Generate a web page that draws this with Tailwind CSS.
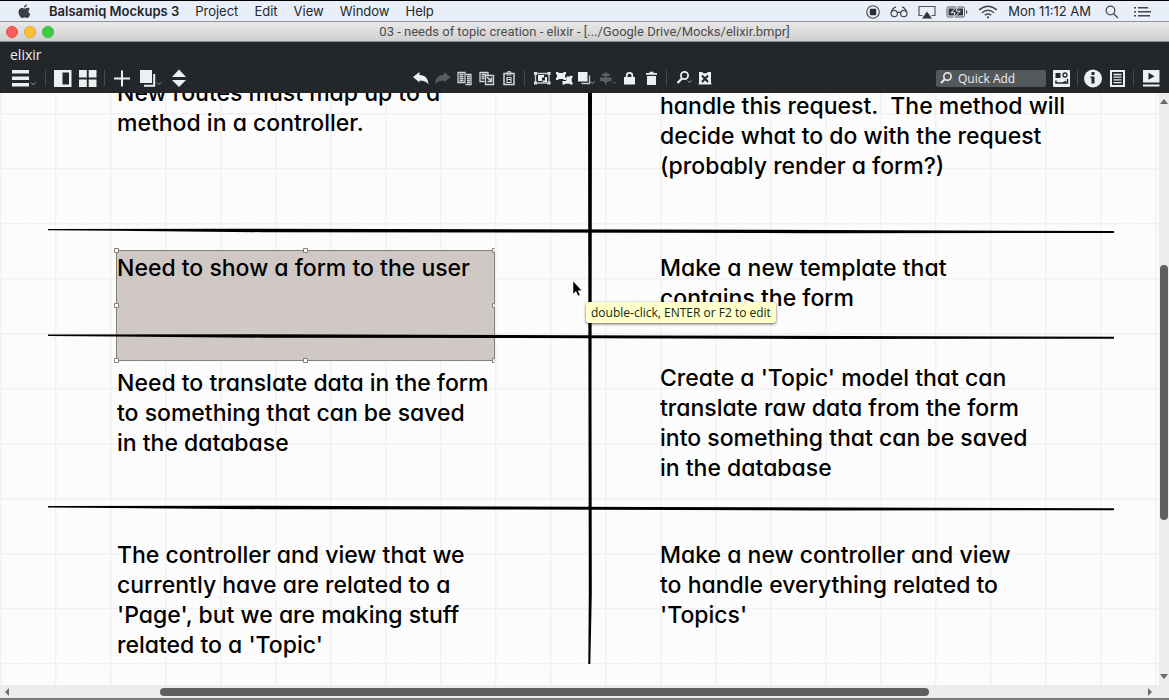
<!DOCTYPE html>
<html lang="en">
<head>
<meta charset="utf-8">
<title>elixir - Balsamiq Mockups 3</title>
<script src="https://cdn.jsdelivr.net/npm/@tailwindcss/browser@4"></script>
</head>
<body class="flex h-screen flex-col overflow-hidden bg-[#fcfcfc] font-['Inter',sans-serif] text-black">

<!-- System menu bar -->
<header class="flex h-[22px] shrink-0 items-center border-t border-b border-t-black border-b-[#8e9296] bg-[#e9eff8] pt-px pr-[18px] pl-[18px] text-[13px] text-[#23262b]">
  <nav aria-label="Menu bar" class="flex items-center gap-4">
    <button aria-label="Apple menu" class="mr-[2px]"><svg class="block" width="13" height="15" viewBox="0 0 13 15" fill="#3c4046"><path d="M8.9 0.3c.1 1.700-1.300 3.200-2.800 3.200C6 2 7.400.500 8.900.300zM11.900 5.100c-2 1.300-1.700 4.100.500 5-.6 1.700-1.900 4-3.200 4-1 0-1.400-.6-2.500-.6s-1.500.6-2.400.6C2.400 14.100.5 10.800.5 8.100c0-2.700 1.700-4.200 3.400-4.200 1.100 0 2 .7 2.700.7s1.700-.8 3-.8c.9 0 1.700.5 2.300 1.300z"/></svg></button>
    <button class="font-semibold">Balsamiq Mockups 3</button>
    <button>Project</button>
    <button>Edit</button>
    <button>View</button>
    <button>Window</button>
    <button>Help</button>
  </nav>
  <div class="ml-auto flex items-center gap-[10px]">
    <button aria-label="Recording"><svg class="block" width="14" height="14" viewBox="0 0 14 14"><circle cx="7" cy="7" r="6.300" fill="none" stroke="#44484d" stroke-width="1.100"/><rect x="3.800" y="3.800" width="6.400" height="6.400" rx="1" fill="#2b2e33"/></svg></button>
    <button aria-label="Reader"><svg class="block" width="18" height="12" viewBox="0 0 18 12" fill="none" stroke="#44484d" stroke-width="1.200"><circle cx="4.200" cy="7.500" r="3.200"/><circle cx="13.800" cy="7.500" r="3.200"/><path d="M7.300 6.800q1.700-1.300 3.400 0M1.200 6.500C2 3.500 3.500 1.500 6 1.200M16.800 6.500C16 3.500 14.500 1.500 12 1.200"/></svg></button>
    <button aria-label="AirPlay"><svg class="block" width="18" height="14" viewBox="0 0 18 14"><path d="M4.500 10.500H1v-9h16v9h-3.500" fill="none" stroke="#55595e" stroke-width="1.200"/><path d="M9 6.500l5 7H4z" fill="#33363b"/></svg></button>
    <button aria-label="Battery"><svg class="block" width="22" height="12" viewBox="0 0 22 12"><rect x="1" y="1" width="17.500" height="10" rx="1.500" fill="none" stroke="#55595e"/><rect x="2.500" y="2.500" width="14.500" height="7" fill="#33363b"/><path d="M20 4v4q1.500-.5 1.500-2T20 4z" fill="#55595e"/><path d="M11.500 0L5 6.700h4L7.500 12l6.800-6.900h-4z" fill="#33363b" stroke="#e9eff8"/></svg></button>
    <button aria-label="Wi-Fi"><svg class="block" width="20" height="14" viewBox="0 0 20 14" fill="none" stroke="#44484d" stroke-width="1.400"><path d="M1 4.900q9-7.400 18 0M4 7.700q6-4.900 12 0M6.800 10.300q3.200-2.500 6.400 0"/><circle cx="10" cy="12.300" r="1.100" fill="#44484d" stroke="none"/></svg></button>
    <time>Mon 11:12 AM</time>
    <button aria-label="Spotlight" class="ml-[4px]"><svg class="block" width="14" height="14" viewBox="0 0 14 14" fill="none" stroke="#44484d" stroke-width="1.300"><circle cx="5.500" cy="5.500" r="4.300"/><path d="M8.700 8.700L13 13"/></svg></button>
    <button aria-label="Notification Center" class="ml-[4px]"><svg class="block" width="18" height="12" viewBox="0 0 18 12" fill="#44484d"><path d="M1 1h2v1.500H1zM1 5h2v1.500H1zM1 9h2v1.500H1zM5 1h10v1.500H5zM5 5h13v1.500H5zM5 9h12v1.500H5z"/></svg></button>
  </div>
</header>

<!-- Window title bar -->
<div class="grid h-5 shrink-0 grid-cols-[1fr_auto_1fr] items-center border-b border-[#8b8b8b] bg-linear-to-b from-[#e9e9e9] to-[#cfcfcf] px-[6px]">
  <div class="flex gap-[6px]">
    <button aria-label="Close" class="size-3 rounded-full border border-[#e2504b] bg-[#f85e57]"></button>
    <button aria-label="Minimize" class="size-3 rounded-full border border-[#e3a832] bg-[#fabd35]"></button>
    <button aria-label="Zoom" class="size-3 rounded-full border border-[#37b83a] bg-[#3fca42]"></button>
  </div>
  <h1 class="font-['Roboto',sans-serif] text-[13px] leading-[18px] text-[#4c4c4c]">03 - needs of topic creation - elixir - [.../Google Drive/Mocks/elixir.bmpr]</h1>
</div>

<!-- Application toolbar -->
<div class="flex h-[51px] shrink-0 flex-col bg-[#23272a] font-['Open_Sans',sans-serif] text-[#edf0f1]">
  <div class="mb-[2px] flex h-6 items-center px-[10px] text-[14px]">elixir</div>
  <div class="flex h-5 items-center pr-[9px] pl-[11px]">
    <div class="flex basis-[401px] items-center">
      <button aria-label="Main menu"><svg class="block" width="27" height="20" viewBox="0 0 27 20" fill="#edf0f1"><path d="M1 2h17v3.500H1zM1 8.500h17V12H1zM1 15h17v3.500H1z"/><path d="M20 14.500l2.300 2.300 2.300-2.300" fill="none" stroke="#9a9ea1"/></svg></button>
      <span class="mx-[7px] h-4 w-px bg-[#44494c]"></span>
      <button aria-label="Toggle navigator" class="ml-px"><svg class="block" width="18" height="20" viewBox="0 0 18 20"><path d="M0 2h17.500v17H0zM8.500 4.500v12H15v-12z" fill="#edf0f1" fill-rule="evenodd"/></svg></button>
      <button aria-label="Grid view" class="ml-[7px]"><svg class="block" width="18" height="20" viewBox="0 0 18 20" fill="#edf0f1"><path d="M0 2h7.800v7.500H0zM9.700 2h7.800v7.500H9.700zM0 11.500h7.800V19H0zM9.700 11.500h7.800V19H9.700z"/></svg></button>
      <span class="mx-[7px] h-4 w-px bg-[#44494c]"></span>
      <button aria-label="New mockup"><svg class="block" width="20" height="20" viewBox="0 0 20 20"><path d="M2 10.500h16M10 2.500v16" stroke="#edf0f1" stroke-width="2"/></svg></button>
      <button aria-label="Duplicate mockup" class="ml-[8px]"><svg class="block" width="23" height="20" viewBox="0 0 23 20"><rect y="2" width="12" height="13" fill="#edf0f1"/><path d="M14.200 6v11.800H4" stroke="#edf0f1" stroke-width="2" fill="none"/><path d="M17 14.500l2 2 2-2" fill="none" stroke="#9a9ea1"/></svg></button>
      <button aria-label="Previous or next mockup" class="ml-[9px]"><svg class="block" width="14" height="20" viewBox="0 0 14 20" fill="#edf0f1"><path d="M7 1.500L14 9H0zM0 12h14l-7 7z"/></svg></button>
    </div>
    <div class="flex items-center">
      <button aria-label="Undo"><svg class="block" width="18" height="20" viewBox="0 0 18 20"><path d="M1 9L7.500 4v3c6 .3 8.500 3.500 9 9.500-2-3-4.500-4-9-4v2z" fill="#edf0f1"/></svg></button>
      <button aria-label="Redo" class="ml-[4px]"><svg class="block" width="18" height="20" viewBox="0 0 18 20"><path d="M16.500 9L10 4v3c-6 .3-8.500 3.500-9 9.500 2-3 4.500-4 9-4v2z" fill="#595d60"/></svg></button>
      <button aria-label="Copy" class="ml-[5px]"><svg class="block" width="16" height="20" viewBox="0 0 16 20" fill="none" stroke="#d3d6d7"><path d="M1 4.500h7v10H1zM2.500 6.500h4M2.500 8.500h4M2.500 10.500h4M2.500 12.500h4M9 6.500h5v10H8.500M10 8.500h3M10 10.500h3M10 12.500h3M10 14.500h3" stroke-width="1.300"/></svg></button>
      <button aria-label="Duplicate" class="ml-[6px]"><svg class="block" width="16" height="20" viewBox="0 0 16 20" fill="none" stroke="#d3d6d7" stroke-width="1.300"><path d="M5.500 13.500H1v-9h8v3M2.500 6.500h5M2.500 8.500h3M2.500 10.500h3M6.500 7.500h8v9h-8z"/><path d="M8 9l4 4M12.500 9.500v4h-4" stroke-width="1.700"/></svg></button>
      <button aria-label="Paste" class="ml-[8px]"><svg class="block" width="12" height="20" viewBox="0 0 12 20" fill="none" stroke="#d3d6d7"><path d="M1 5.500h10v11H1z" stroke-width="1.500"/><path d="M4 5.500c0-2.500 4-2.500 4 0M3.500 7h5M4 9.500h4v5H4zM4.500 11.500h3" stroke-width="1.200"/></svg></button>
      <span class="mx-[9px] h-4 w-px bg-[#44494c]"></span>
      <button aria-label="Group"><svg class="block" width="17" height="20" viewBox="0 0 17 20" fill="#edf0f1"><path d="M0 4h3v3H0zM13.500 4h3v3h-3zM0 13.500h3v3H0zM13.500 13.500h3v3h-3z"/><path d="M1.500 5.500h13.500v9.500H1.500z" fill="none" stroke="#c9cccd" stroke-width="1.300"/><path d="M4 7h6v2.500H8V13H4zM11 9h2v5H8.500v-1.500H11z"/></svg></button>
      <button aria-label="Ungroup" class="ml-[5px]"><svg class="block" width="17" height="20" viewBox="0 0 17 20" fill="#edf0f1"><path d="M0 4h2.500v1h5V4H10v2.500H9v3h1V12H7.500v-1h-5v1H0V9.500h1v-3H0zM10.500 8.500H14v-.8h2.500V10h-.8v4h.8v2.500H14v-.8H9v.8H6.500V13h3.700z"/></svg></button>
      <button aria-label="Arrange layers" class="ml-[4px]"><svg class="block" width="18" height="20" viewBox="0 0 18 20"><rect x="1" y="4" width="9.500" height="9.500" fill="#edf0f1"/><path d="M12.500 7.500v8H4.500" stroke="#c9cccd" stroke-width="1.300" fill="none"/><path d="M13.500 13.500l2 2 2-2" fill="none" stroke="#9a9ea1"/></svg></button>
      <button aria-label="Align" class="ml-[4px]"><svg class="block" width="18" height="20" viewBox="0 0 18 20"><path d="M6 4h1.500v1.500h3V8h-3v1.500h5V13h-3v1h-2v2.500H6V14H4v-1H1V9.500h5V8H3V5.500h3z" fill="#5b5f62"/><path d="M13.500 13.500l2 2 2-2" fill="none" stroke="#5b5f62"/></svg></button>
      <button aria-label="Lock" class="ml-[7px]"><svg class="block" width="11" height="20" viewBox="0 0 11 20"><path d="M0 9h11v7.500H0z" fill="#edf0f1"/><path d="M2.700 9.500V7.500c0-3.500 5.600-3.500 5.600 0v2" fill="none" stroke="#edf0f1" stroke-width="1.700"/></svg></button>
      <button aria-label="Delete" class="ml-[11px]"><svg class="block" width="11" height="20" viewBox="0 0 11 20" fill="#edf0f1"><path d="M0 5h3.500V3.800h4V5H11v1.700H0zM1 8h9v9H1z"/></svg></button>
      <span class="mx-[9px] h-4 w-px bg-[#44494c]"></span>
      <button aria-label="Zoom level"><svg class="block" width="17" height="20" viewBox="0 0 17 20" fill="none"><circle cx="8.500" cy="7.500" r="3.600" stroke="#edf0f1" stroke-width="1.800"/><path d="M6 10.500L1.500 15" stroke="#edf0f1" stroke-width="2.300"/><path d="M11.500 12.500l2 2 2-2" stroke="#9a9ea1"/></svg></button>
      <button aria-label="Toggle markup" class="ml-[5px]"><svg class="block" width="14" height="20" viewBox="0 0 14 20"><path d="M1 4h3l1.500 1.300h3L10 4h3v10l.5 2.500H.5L1 14z" fill="#edf0f1"/><path d="M4 7.500l6 6.500M10 7.500L4 14" stroke="#23272a" stroke-width="2"/></svg></button>
    </div>
    <div class="ml-auto flex items-center">
      <label class="flex h-[17px] w-[110px] items-center gap-[6px] rounded-xs bg-[#54585b] pl-[4px]">
        <svg class="shrink-0" width="12" height="14" viewBox="0 0 12 14" fill="none" stroke="#edf0f1"><circle cx="7.500" cy="5.500" r="3.700" stroke-width="1.500"/><path d="M4.500 8.500L1 12" stroke-width="2"/></svg>
        <input type="text" aria-label="Quick Add" placeholder="Quick Add" class="h-full w-full min-w-0 text-[12px] text-[#edf0f1] outline-none placeholder:text-[#edf0f1]">
      </label>
      <button aria-label="UI library" class="ml-[7px]"><svg class="block" width="17" height="20" viewBox="0 0 17 20"><rect y="2" width="17" height="17" rx="1" fill="#edf0f1"/><path d="M2.500 5h5v5h-5z" fill="#23272a"/><circle cx="12" cy="7" r="2" fill="none" stroke="#23272a" stroke-width="1.300"/><path d="M3 12.500v2.500h7l3-1.500M14.500 11v4h-4" fill="none" stroke="#23272a" stroke-width="1.500"/></svg></button>
      <span class="mr-[6px] ml-[7px] h-4 w-px bg-[#44494c]"></span>
      <button aria-label="Inspector"><svg class="block" width="18" height="20" viewBox="0 0 18 20"><circle cx="9" cy="10.500" r="9" fill="#edf0f1"/><path d="M7.500 4h3v3h-3zM6.500 8.500h4v7h-3v-5.300h-1z" fill="#23272a"/></svg></button>
      <button aria-label="Project info" class="ml-[8px]"><svg class="block" width="15" height="20" viewBox="0 0 15 20"><path d="M1 3h13v15H1z" fill="none" stroke="#edf0f1" stroke-width="2"/><path d="M3.500 6.500h8M3.500 9.200h8M3.500 11.900h8M3.500 14.600h8" stroke="#edf0f1" stroke-width="1.300"/></svg></button>
      <span class="mx-[8px] h-4 w-px bg-[#44494c]"></span>
      <button aria-label="Full screen presentation"><svg class="block" width="18" height="20" viewBox="0 0 18 20"><path d="M1 2h16.500v12.500H1zM1 16.500h16.500v2H1z" fill="#edf0f1"/><path d="M6.500 4.700l6 3.500-6 3.500z" fill="#23272a"/></svg></button>
    </div>
  </div>
</div>

<!-- Canvas and its scroll bars -->
<div class="flex min-h-0 flex-1">
  <main class="relative min-w-0 flex-1 overflow-hidden text-[23px] leading-[30px] font-medium [font-feature-settings:'cv11']">
    <svg class="absolute inset-0 size-full" aria-hidden="true">
      <defs>
        <pattern id="grid" width="55" height="55" y="20" patternUnits="userSpaceOnUse">
          <path d="M28 0v55M0 11.500h55M0 22.500h55M0 33.500h55M0 44.500h55" stroke="#fafafa" fill="none"/>
          <path d="M.5 0v55M0 .5h55" stroke="#f1f1f1" stroke-width="2" fill="none"/>
        </pattern>
      </defs>
      <rect width="100%" height="100%" fill="url(#grid)"/>
    </svg>

    <p class="absolute top-[-15px] left-[117px] whitespace-nowrap">New routes must map up to a<br>method in a controller.</p>
    <p class="absolute top-[-2px] left-[660px] whitespace-pre">handle this request.  The method will
decide what to do with the request
(probably render a form?)</p>
    <p class="absolute top-[160px] left-[660px] whitespace-nowrap">Make a new template that<br>contains the form</p>
    <p class="absolute top-[275px] left-[117px] whitespace-nowrap">Need to translate data in the form<br>to something that can be saved<br>in the database</p>
    <p class="absolute top-[270px] left-[660px] whitespace-nowrap">Create a 'Topic' model that can<br>translate raw data from the form<br>into something that can be saved<br>in the database</p>
    <p class="absolute top-[447px] left-[117px] whitespace-nowrap">The controller and view that we<br>currently have are related to a<br>'Page', but we are making stuff<br>related to a 'Topic'</p>
    <p class="absolute top-[447px] left-[660px] whitespace-nowrap">Make a new controller and view<br>to handle everything related to<br>'Topics'</p>

    <div class="absolute top-[157px] left-[116px] h-[111px] w-[379px] border border-[#857f7d] bg-[#cfc8c5]">
      <p class="mt-[2px] whitespace-nowrap">Need to show a form to the user</p>
    </div>

    <svg class="absolute top-0 left-0" width="1158" height="592" viewBox="0 0 1158 592" aria-hidden="true">
      <path d="M588 0h4l-.5 300 .3 200-.8 40-.7 31h-2l.5-71z"/>
      <path d="M48 136l200-.3 400 .8 466 1.500v2l-300 .2-300-.6-250-.4-150-1.400-66-.5z"/>
      <path d="M48 241.500l200-.3 400 1.200 466 1.300v2l-300 .2-300-.8-250-.4-150-1.200-66-.5z"/>
      <path d="M48 413l200-.3 400 1.200 466 1.300v2l-300 .2-300-.8-250-.4-150-1.200-66-.5z"/>
      <g fill="#fff" stroke="#857f7d">
        <path d="M114.500 155.500h4v4h-4zM303.500 155.500h4v4h-4zM494.500 155.500h-2v4h2M114.500 210.500h4v4h-4zM494.500 210.500h-2v4h2M114.500 265.500h4v4h-4zM303.500 265.500h4v4h-4zM494.500 265.500h-2v4h2"/>
      </g>
      <path d="M573 188v13l3-2.600 2 4.600 2-1-1.800-4.300h3.800z" stroke="#fff" stroke-width=".5"/>
    </svg>

    <div role="tooltip" class="absolute top-[209px] left-[586px] rounded-[3px] bg-[#ffffcb] px-[5px] font-['Open_Sans',sans-serif] text-[12px] leading-[21px] font-normal whitespace-nowrap text-[#122a16] shadow-[0_1px_3px_#00000099]">double-click, ENTER or F2 to edit</div>
  </main>
  <div class="flex w-[10px] shrink-0 flex-col items-center bg-[#ececec]" aria-hidden="true">
    <svg class="mt-[6px] block shrink-0" width="8" height="5" viewBox="0 0 8 5"><path d="M4 0l4 5H0z" fill="#6a6a6a"/></svg>
    <div class="grow-[161]"></div>
    <div class="w-2 grow-[256] rounded-full bg-[#606060]"></div>
    <div class="grow-[154]"></div>
    <svg class="mb-[6px] block shrink-0" width="8" height="5" viewBox="0 0 8 5"><path d="M4 5L0 0h8z" fill="#6a6a6a"/></svg>
  </div>
</div>
<div class="flex h-[15px] shrink-0 items-center border-b-2 border-[#77797a] bg-[#ececec] pr-[17px] pl-[5px]" aria-hidden="true">
  <svg class="block shrink-0" width="4" height="8" viewBox="0 0 4 8"><path d="M0 4l4-4v8z" fill="#6a6a6a"/></svg>
  <div class="grow-[151]"></div>
  <div class="h-2 grow-[769] rounded-full bg-[#606060]"></div>
  <div class="grow-[219]"></div>
  <svg class="block shrink-0" width="4" height="8" viewBox="0 0 4 8"><path d="M4 4L0 0v8z" fill="#6a6a6a"/></svg>
</div>
</body>
</html>
